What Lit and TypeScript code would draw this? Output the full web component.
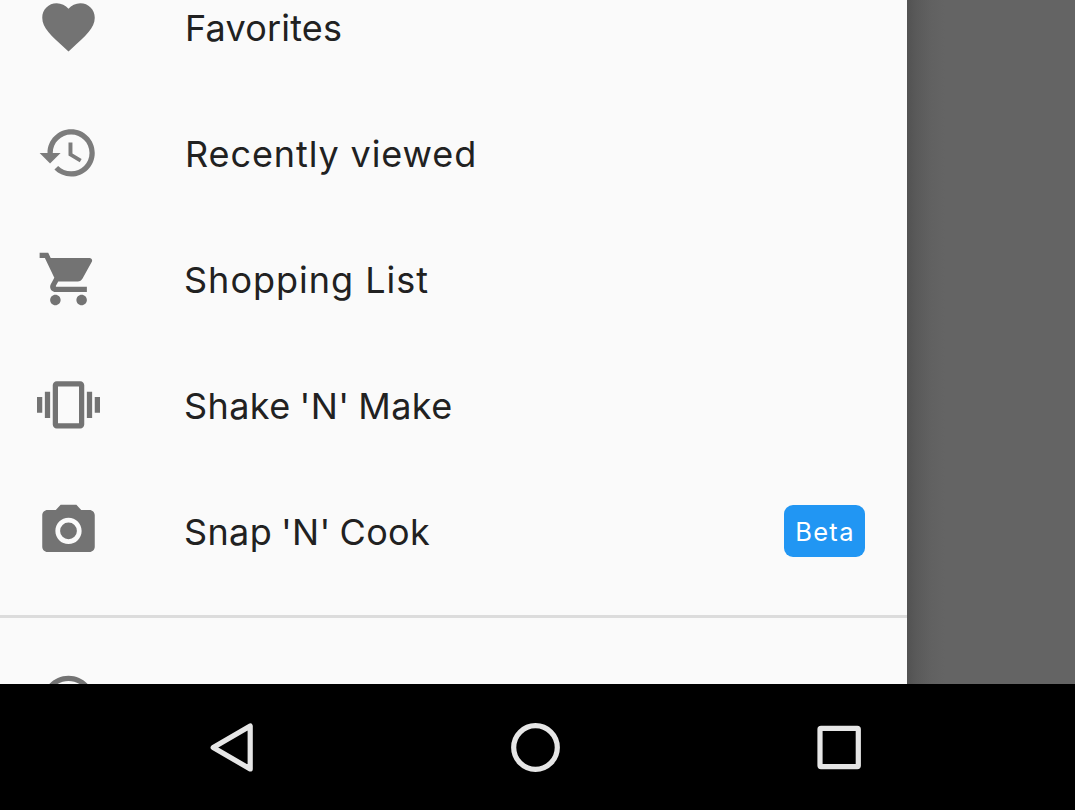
import { LitElement, html, css, svg } from "lit";
import { customElement } from "lit/decorators.js";

interface MenuItem {
  label: string;
  icon: string;
  tracking: number;
  wordGap?: number;
  indent?: number;
  tone?: string;
  badge?: string;
}

const ICONS: Record<string, string> = {
  heart:
    "M12 21.35l-1.45-1.32C5.4 15.36 2 12.28 2 8.5 2 5.42 4.42 3 7.5 3c1.74 0 3.41.81 4.5 2.09C13.09 3.81 14.76 3 16.5 3 19.58 3 22 5.42 22 8.5c0 3.78-3.4 6.86-8.55 11.54L12 21.35z",
  history:
    "M13 3c-4.97 0-9 4.03-9 9H1l3.89 3.89.07.14L9 12H6c0-3.87 3.13-7 7-7s7 3.13 7 7-3.13 7-7 7c-1.93 0-3.68-.79-4.94-2.06l-1.42 1.42C8.27 19.99 10.51 21 13 21c4.97 0 9-4.03 9-9s-4.03-9-9-9zm-1 5v5l4.28 2.54.72-1.21-3.5-2.08V8H12z",
  cart:
    "M7 18c-1.1 0-1.99.9-1.99 2S5.9 22 7 22s2-.9 2-2-.9-2-2-2zM1 2v2h2l3.6 7.59-1.35 2.45c-.16.28-.25.61-.25.96 0 1.1.9 2 2 2h12v-2H7.42c-.14 0-.25-.11-.25-.25l.03-.12.9-1.63h7.45c.75 0 1.41-.41 1.75-1.03l3.58-6.49c.08-.14.12-.31.12-.48 0-.55-.45-1-1-1H5.21l-.94-2H1zm16 16c-1.1 0-1.99.9-1.99 2s.89 2 1.99 2 2-.9 2-2-.9-2-2-2z",
  vibration:
    "M0 15h2V9H0v6zm3 2h2V7H3v10zm19-8v6h2V9h-2zm-3 8h2V7h-2v10zM16.5 3h-9C6.67 3 6 3.67 6 4.5v15c0 .83.67 1.5 1.5 1.5h9c.83 0 1.5-.67 1.5-1.5v-15c0-.83-.67-1.5-1.5-1.5zM16 19H8V5h8v14z",
  camera:
    "M12 8.8a3.2 3.2 0 1 0 0 6.4 3.2 3.2 0 0 0 0-6.4zM9 2L7.17 4H4c-1.1 0-2 .9-2 2v12c0 1.1.9 2 2 2h16c1.1 0 2-.9 2-2V6c0-1.1-.9-2-2-2h-3.17L15 2H9zm3 15c-2.76 0-5-2.24-5-5s2.24-5 5-5 5 2.24 5 5-2.24 5-5 5z",
  help:
    "M11 18h2v-2h-2v2zm1-16C6.48 2 2 6.48 2 12s4.48 10 10 10 10-4.48 10-10S17.52 2 12 2zm0 18c-4.41 0-8-3.59-8-8s3.59-8 8-8 8 3.59 8 8-3.59 8-8 8z",
};

const PRIMARY: MenuItem[] = [
  { label: "Favorites", icon: "heart", tracking: 0.2, indent: 1 },
  { label: "Recently viewed", icon: "history", tracking: 0.9, indent: 1, tone: "#7c7c7c" },
  { label: "Shopping List", icon: "cart", tracking: 1 },
  { label: "Shake 'N' Make", icon: "vibration", tracking: 0.4, wordGap: -1.6 },
  { label: "Snap 'N' Cook", icon: "camera", tracking: 0.35, wordGap: -1.6, badge: "Beta" },
];

@customElement("drawer-row")
export class DrawerRow extends LitElement {
  static properties = { item: { attribute: false } };
  declare item: MenuItem;

  static styles = css`
    :host {
      display: flex;
      align-items: center;
      box-sizing: border-box;
      height: 126px;
      flex: none;
      padding: 0 42px 0 37px;
    }
    .icon {
      display: block;
      width: 63px;
      height: 63px;
      flex: none;
      margin-right: 84px;
    }
    .label {
      flex: 1;
      font-size: 36px;
      line-height: 48px;
      padding-top: 2px;
      white-space: nowrap;
    }
    .badge {
      box-sizing: border-box;
      width: 81px;
      height: 52px;
      border-radius: 9px;
      background: #2196f3;
      color: #fff;
      font-size: 25.5px;
      line-height: 53px;
      text-align: center;
      letter-spacing: 1.3px;
      text-indent: 1px;
    }
  `;

  render() {
    const { label, icon, tracking, wordGap = 0, indent = 0, tone, badge } = this.item;
    return html`
      <svg class="icon" viewBox="0 0.22 24 24" fill=${tone ?? "#737373"}>
        ${svg`<path d=${ICONS[icon]}></path>`}
      </svg>
      <span
        class="label"
        style="letter-spacing:${tracking}px;word-spacing:${wordGap}px;text-indent:${indent}px"
        >${label}</span
      >
      ${badge ? html`<span class="badge">${badge}</span>` : null}
    `;
  }
}

@customElement("app-root")
export class AppRoot extends LitElement {
  static styles = css`
    :host {
      display: flex;
      flex-direction: column;
      width: 1075px;
      height: 810px;
      overflow: hidden;
      background: #646464;
      color: #212121;
      font-family: Inter, "Open Sans", sans-serif;
    }
    .screen {
      display: flex;
      height: 684px;
      overflow: hidden;
    }
    .drawer {
      display: flex;
      flex-direction: column;
      width: 907px;
      flex: none;
      overflow: hidden;
      background: #fafafa;
    }
    .group {
      display: flex;
      flex-direction: column;
      flex: none;
    }
    .first {
      margin-top: -36px;
    }
    .divider {
      height: 3px;
      flex: none;
      margin: 21px 0;
      background: #dcdcdc;
    }
    .scrim {
      flex: 1;
      background: linear-gradient(to right, #525252, #5a5a5a 10px, #616161 24px, #646464 38px);
    }
    .nav {
      display: flex;
      align-items: center;
      justify-content: space-between;
      height: 126px;
      box-sizing: border-box;
      padding: 0 204px 0 200px;
      background: #000;
    }
    .key {
      display: block;
      width: 63px;
      height: 63px;
      fill: none;
      stroke: #e6e6e6;
      stroke-width: 5.2px;
      stroke-linejoin: round;
    }
  `;

  render() {
    return html`
      <div class="screen">
        <div class="drawer">
          <div class="group first">
            ${PRIMARY.map((item) => html`<drawer-row .item=${item}></drawer-row>`)}
          </div>
          <div class="divider"></div>
          <div class="group">
            <drawer-row .item=${{ label: "", icon: "help", tracking: 0 }}></drawer-row>
          </div>
        </div>
        <div class="scrim"></div>
      </div>
      <div class="nav">
        <svg class="key" viewBox="0 0 63 63"><path d="M13.2 31.5L50.2 10V53Z"></path></svg>
        <svg class="key" viewBox="0 0 63 63"><circle cx="31.5" cy="31.5" r="21.8"></circle></svg>
        <svg class="key" viewBox="0 0 63 63"><rect x="12" y="12.3" width="38.3" height="38.3" rx="1"></rect></svg>
      </div>
    `;
  }
}
